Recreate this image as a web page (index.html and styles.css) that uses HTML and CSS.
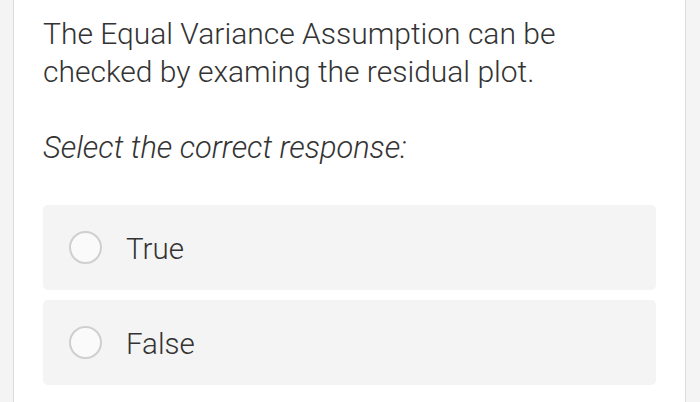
FILE: index.html
```html
<!DOCTYPE html>
<html>
<head>
<meta charset="utf-8">
<link rel="stylesheet" href="styles.css">
</head>
<body>
<div class="card">
  <p class="question">The Equal Variance Assumption can be checked by examing the residual plot.</p>
  <p class="prompt">Select the correct response:</p>
  <div class="options">
    <div class="option"><span class="radio"></span><span class="label">True</span></div>
    <div class="option"><span class="radio"></span><span class="label">False</span></div>
  </div>
</div>
</body>
</html>
```

FILE: styles.css
```css
html, body {
  margin: 0;
  padding: 0;
  background: #f4f4f4;
  height: 100%;
}
body {
  font-family: Roboto, "Liberation Sans", sans-serif;
  font-weight: 300;
  color: #333;
  overflow: hidden;
}
.card {
  margin-left: 13px;
  width: 613px;
  min-height: 402px;
  background: #fff;
  border-left: 1px solid #dcdcdc;
  border-right: 1px solid #dcdcdc;
  padding: 15px 29px 0 29px;
  box-sizing: content-box;
}
.question {
  margin: 0;
  font-size: 30px;
  line-height: 38px;
  width: 540px;
}
.prompt {
  margin: 38px 0 0 0;
  font-size: 30.8px;
  line-height: 38px;
  font-style: italic;
}
.options {
  margin-top: 38px;
  display: flex;
  flex-direction: column;
  gap: 10px;
}
.option {
  height: 85px;
  background: #f4f4f4;
  border-radius: 5px;
  display: flex;
  align-items: center;
  padding-left: 26px;
}
.radio {
  width: 29px;
  height: 29px;
  border: 2px solid #cfcfcf;
  border-radius: 50%;
  background: #fafafa;
  flex: none;
}
.label {
  margin-left: 24px;
  font-size: 29.5px;
  line-height: 38px;
  padding-top: 2px;
}
```
